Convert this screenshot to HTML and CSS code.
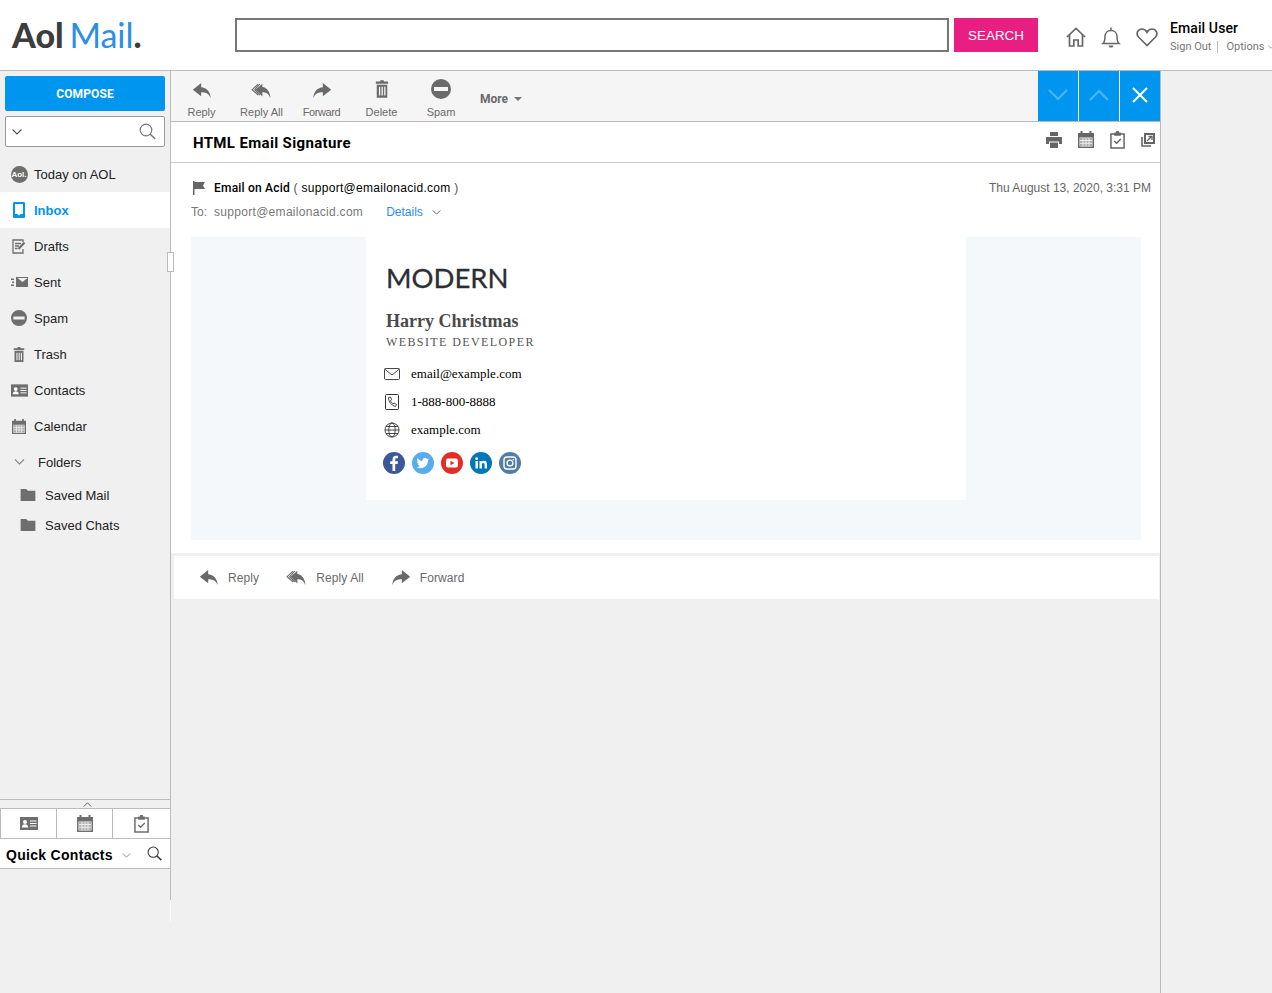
FILE: index.html
```html
<!DOCTYPE html>
<html lang="en">
<head>
  <meta charset="UTF-8" />
  <title>Aol Mail</title>
  <link rel="stylesheet" href="styles.css">
</head>
<body>

  <svg class="sprite" xmlns="http://www.w3.org/2000/svg">
    <symbol id="i-reply" viewBox="0 0 24 20"><path d="M11 1 1 9l10 8v-5c5 0 9 1 11.500 7C22 11 17 6.500 11 6Z"/></symbol>
    <symbol id="i-replyall" viewBox="0 0 24 20"><path d="M13 2 5 9l8 8v-5c4 0 7 1 9.500 7C22 11 18 6.500 13 6Z"/><path d="M8 2.500 1 9l7 6.500M10 2.500 4 9l6 6.500" fill="none" stroke="currentColor" stroke-width="1.300"/></symbol>
    <symbol id="i-forward" viewBox="0 0 24 20"><path d="M13 1l10 8-10 8v-5c-5 0-9 1-11.500 7C2 11 7 6.500 13 6Z"/></symbol>
    <symbol id="i-trash" viewBox="0 0 16 20"><path d="M6 0h4v1.500h5V4H1V1.500h5ZM2 5h12v15H2Zm2.500 2.500v10h1.500v-10Zm3 0v10H9v-10Zm3 0v10H12v-10Z" fill-rule="evenodd"/></symbol>
    <symbol id="i-spam" viewBox="0 0 20 20"><path d="M10 0a10 10 0 1 1 0 20a10 10 0 0 1 0-20ZM3 8v4h14V8Z" fill-rule="evenodd"/></symbol>
    <symbol id="i-search" viewBox="0 0 17 17"><circle cx="7" cy="7" r="5.800" fill="none" stroke="currentColor" stroke-width="1.200"/><path d="m11 11 5.300 5" fill="none" stroke="currentColor" stroke-width="1.600"/></symbol>
    <symbol id="i-chev" viewBox="0 0 10 6"><path d="m.5.500 4.500 4.500L9.500.500" fill="none" stroke="currentColor" stroke-width="1.100"/></symbol>
    <symbol id="i-cal" viewBox="0 0 16 17"><path d="M0 2h2.500V0h2v2h7V0h2v2H16v15H0Zm1.500 4.500v9h13v-9Z" fill-rule="evenodd"/><path d="M2 7h12v8H2Z" fill-opacity=".55"/><path d="M5 7v8.500M8 7v8.500M11 7v8.500M2 9.500h12M2 12.300h12" stroke="#f4f4f4" stroke-width=".9"/></symbol>
    <symbol id="i-task" viewBox="0 0 16 19"><path d="M1 3h14v15H1Z" fill="none" stroke="currentColor" stroke-width="1.600"/><path d="M4.500 1.500h2V0h3v1.500h2V5h-7Z"/><path d="m4.500 10.500 2.500 2.500 4.500-4.500" fill="none" stroke="currentColor" stroke-width="1.500"/></symbol>
    <symbol id="i-card" viewBox="0 0 18 13"><path d="M0 0h18v13H0Z"/><circle cx="5" cy="5" r="2" fill="#fff"/><path d="M1.800 10.500c0-2.500 1.500-3.300 3.200-3.300s3.200.8 3.200 3.300Z" fill="#fff"/><path d="M10 4h6.500M10 6.500h6.500M10 9h6.500" stroke="#fff"/></symbol>
    <symbol id="i-folder" viewBox="0 0 16 13"><path d="M0 0h6l2 2h8v11H0Z"/></symbol>
  </svg>

  <header class="topbar">
    <a class="logo"><b>Aol</b> <span>Mail</span><b>.</b></a>
    <form class="search">
      <input class="search-input" type="text" />
      <button class="search-btn" type="button">SEARCH</button>
    </form>
    <div class="top-icons">
      <svg width="20" height="20" viewBox="0 0 20 20" fill="none" stroke="currentColor" stroke-width="1.700"><path d="M1 10 10 1.500 19 10M3.500 8v11h4.300v-6h4.400v6h4.300V8"/></svg>
      <svg width="20" height="22" viewBox="0 0 20 22" fill="none" stroke="currentColor" stroke-width="1.500"><path d="M2 17.500c2-2 2-4 2-7 0-3.500 2.500-6 6-6s6 2.500 6 6c0 3 0 5 2 7ZM10 1.500v3"/><path d="M7.500 19.500h5l-1 2h-3Z" fill="currentColor" stroke="none"/></svg>
      <svg width="22" height="20" viewBox="0 0 22 20" fill="none" stroke="currentColor" stroke-width="1.700"><path d="M11 18.500 2.500 10C-.5 6.500 2 2 6 2c2.200 0 4 1.300 5 3.300C12 3.300 13.800 2 16 2c4 0 6.500 4.500 3.500 8Z"/></svg>
    </div>
    <div class="user">
      <div class="user-name">Email User</div>
      <div class="user-links"><a>Sign Out</a><a class="user-opt">Options <svg width="6" height="4"><use href="#i-chev"/></svg></a></div>
    </div>
  </header>

  <div class="app">
    <aside class="sidebar">
      <button class="compose" type="button">COMPOSE</button>
      <div class="side-search">
        <svg width="10" height="6"><use href="#i-chev"/></svg>
        <svg class="side-search-icon" width="17" height="17"><use href="#i-search"/></svg>
      </div>

      <nav class="nav">
        <a class="nav-item"><span class="nav-ico"><span class="aol-badge">Aol.</span></span>Today on AOL</a>
        <a class="nav-item active"><span class="nav-ico"><svg width="12" height="16" viewBox="0 0 12 16"><path d="M0 1.500C0 .5.500 0 1.500 0h9c1 0 1.500.5 1.500 1.500v13c0 1-.5 1.500-1.500 1.500h-9C.5 16 0 15.500 0 14.500Zm2 .5v10h2.500l1.500 1.500L7.500 12H10V2Z" fill-rule="evenodd"/></svg></span>Inbox</a>
        <a class="nav-item"><span class="nav-ico"><svg width="14" height="15" viewBox="0 0 14 15" fill="none" stroke="currentColor" stroke-width="1.300"><path d="M11 10v4H1V1h10v2M3 4.500h6M3 7h4M3 9.500h2.500"/><path d="m6.500 10 6-6.500" stroke-width="2.200"/></svg></span>Drafts</a>
        <a class="nav-item"><span class="nav-ico"><svg width="17" height="10" viewBox="0 0 17 10"><path d="M5 0h12v10H5Zm1.500 1 5 4 5-4" fill-rule="evenodd"/><path d="M0 1.500h3v1.500H0Zm1 3h2V6H1Zm-1 3h3V9H0Z"/></svg></span>Sent</a>
        <a class="nav-item"><span class="nav-ico"><svg width="16" height="16"><use href="#i-spam"/></svg></span>Spam</a>
        <a class="nav-item"><span class="nav-ico"><svg width="12" height="15"><use href="#i-trash"/></svg></span>Trash</a>
        <a class="nav-item"><span class="nav-ico"><svg width="17" height="13"><use href="#i-card"/></svg></span>Contacts</a>
        <a class="nav-item"><span class="nav-ico"><svg width="14" height="15"><use href="#i-cal"/></svg></span>Calendar</a>
        <a class="nav-item nav-folders"><span class="nav-ico"><svg class="chev-light" width="11" height="6"><use href="#i-chev"/></svg></span>Folders</a>
        <a class="nav-sub"><svg width="16" height="12"><use href="#i-folder"/></svg>Saved Mail</a>
        <a class="nav-sub"><svg width="16" height="12"><use href="#i-folder"/></svg>Saved Chats</a>
      </nav>

      <div class="quick">
        <div class="quick-toggle"><svg width="9" height="5" viewBox="0 0 10 6" fill="none"><path d="m.5 5.500 4.500-4.500 4.500 4.500" stroke="#555" stroke-width="1.100"/></svg></div>
        <div class="quick-tabs">
          <span><svg width="18" height="13"><use href="#i-card"/></svg></span>
          <span><svg width="16" height="17"><use href="#i-cal"/></svg></span>
          <span><svg width="15" height="18"><use href="#i-task"/></svg></span>
        </div>
        <div class="quick-head">
          <b>Quick Contacts</b>
          <svg class="chev-light" width="9" height="5"><use href="#i-chev"/></svg>
          <svg class="quick-search" width="15" height="15"><use href="#i-search"/></svg>
        </div>
      </div>
      <span class="resizer"></span>
    </aside>

    <main class="reader">
      <div class="toolbar">
        <a class="tool"><svg width="20" height="17"><use href="#i-reply"/></svg>Reply</a>
        <a class="tool tool-all"><svg width="21" height="17"><use href="#i-replyall"/></svg>Reply All</a>
        <a class="tool tool-fwd"><svg width="20" height="17"><use href="#i-forward"/></svg>Forward</a>
        <a class="tool tool-del"><svg width="14" height="18"><use href="#i-trash"/></svg>Delete</a>
        <a class="tool tool-spam"><svg width="20" height="20"><use href="#i-spam"/></svg>Spam</a>
        <a class="tool-more">More <i class="caret"></i></a>
        <div class="pager">
          <button type="button" class="pager-off"><svg width="22" height="12"><use href="#i-chev"/></svg></button>
          <button type="button" class="pager-off"><svg class="flip" width="22" height="12"><use href="#i-chev"/></svg></button>
          <button type="button"><svg width="16" height="16" viewBox="0 0 16 16"><path d="m1 1 14 14M15 1 1 15" stroke="#fff" stroke-width="2"/></svg></button>
        </div>
      </div>

      <div class="subject">
        <h1>HTML Email Signature</h1>
        <div class="subject-icons">
          <svg width="16" height="16" viewBox="0 0 16 16"><path d="M4 0h8v4H4ZM0 5h16v7h-3V9.500H3V12H0Zm4 5.500h8V16H4Z"/></svg>
          <svg width="16" height="17"><use href="#i-cal"/></svg>
          <svg width="15" height="18"><use href="#i-task"/></svg>
          <svg width="14" height="14" viewBox="0 0 14 14" fill="none" stroke="currentColor"><path d="M4 1h9v9H4Z" stroke-width="2"/><path d="M1 4v9h9" stroke-width="1.600"/><path d="m6 8 4.500-4.500M7.500 3.500h3.500V7" stroke-width="1.300"/></svg>
        </div>
      </div>

      <div class="meta">
        <div class="meta-row">
          <svg class="flag" width="12" height="14" viewBox="0 0 12 14"><path d="M0 0h1.500v14H0ZM1.500 1H12L10 4.500 12 8H1.500Z"/></svg>
          <span class="sender"><b>Email on Acid</b> <i>(</i> support@emailonacid.com <i>)</i></span>
          <span class="date">Thu August 13, 2020, 3:31 PM</span>
        </div>
        <div class="meta-to">
          <span class="to-label">To:</span>
          <span class="to-addr">support@emailonacid.com</span>
          <a class="details">Details</a>
          <svg width="9" height="5"><use href="#i-chev"/></svg>
        </div>
      </div>

      <div class="message">
        <div class="sig">
          <div class="sig-brand">MODERN</div>
          <div class="sig-name">Harry Christmas</div>
          <div class="sig-role">WEBSITE DEVELOPER</div>
          <div class="sig-line">
            <svg width="16" height="12" viewBox="0 0 16 12" fill="none" stroke="#333" stroke-width=".9"><rect x=".5" y=".5" width="15" height="11" rx="1"/><path d="m.8 1.200 7.200 5.800 7.200-5.800"/></svg>
            email@example.com
          </div>
          <div class="sig-line">
            <svg width="16" height="16" viewBox="0 0 16 16" fill="none" stroke="#333"><rect x="1.500" y=".5" width="13" height="15" rx="1"/><path d="M4.500 3.500c0 4.500 3 8 7 9l1-2-2.500-1.500-1 1C8 9.500 7 8 6.500 6.500l1.200-.8L6.500 3Z" stroke-width=".9"/></svg>
            1-888-800-8888
          </div>
          <div class="sig-line">
            <svg width="16" height="16" viewBox="0 0 16 16" fill="none" stroke="#333" stroke-width=".9"><circle cx="8" cy="8" r="7"/><ellipse cx="8" cy="8" rx="3.200" ry="7"/><path d="M1 8h14M2 4.500h12M2 11.500h12"/></svg>
            example.com
          </div>
          <div class="social">
            <svg width="22" height="22" viewBox="0 0 22 22"><circle cx="11" cy="11" r="11" fill="#3b5998"/><path d="M12.200 19v-7h2.400l.4-2.800h-2.800V7.600c0-.8.300-1.300 1.400-1.300H15V3.800c-.4 0-1.200-.1-2-.1-2.100 0-3.500 1.300-3.500 3.600v1.900H7.200V12h2.300v7Z" fill="#fff"/></svg>
            <svg width="22" height="22" viewBox="0 0 22 22"><circle cx="11" cy="11" r="11" fill="#55acee"/><path d="M17 7.300c-.5.200-1 .4-1.500.4.500-.3.900-.8 1.100-1.400-.5.300-1 .5-1.600.6a2.600 2.600 0 0 0-4.500 2.400C8.400 8.700 6.500 7.700 5.300 6.100c-.7 1.200-.3 2.700.8 3.500-.4 0-.8-.1-1.200-.3 0 1.300.9 2.400 2.100 2.600-.4.100-.8.100-1.200 0 .3 1 1.300 1.800 2.500 1.800A5.300 5.300 0 0 1 4.500 15a7.400 7.400 0 0 0 11.400-6.500c.4-.3.800-.7 1.100-1.200Z" fill="#fff"/></svg>
            <svg width="22" height="22" viewBox="0 0 22 22"><circle cx="11" cy="11" r="11" fill="#e52d27"/><rect x="5" y="6.500" width="12" height="9" rx="2" fill="#fff"/><path d="m9.500 8.800 4 2.200-4 2.200Z" fill="#e52d27"/></svg>
            <svg width="22" height="22" viewBox="0 0 22 22"><circle cx="11" cy="11" r="11" fill="#0077b5"/><path d="M5.500 9h2.400v7.500H5.500ZM6.700 5.300a1.400 1.400 0 1 1 0 2.800 1.400 1.400 0 0 1 0-2.800ZM9.500 9h2.300v1c.4-.7 1.200-1.200 2.300-1.200 2.300 0 2.900 1.500 2.900 3.500v4.200h-2.400v-3.700c0-1-.2-1.900-1.300-1.900s-1.400.8-1.400 1.800v3.800H9.500Z" fill="#fff"/></svg>
            <svg width="22" height="22" viewBox="0 0 22 22"><circle cx="11" cy="11" r="11" fill="#517fa4"/><rect x="5" y="5" width="12" height="12" rx="3" fill="none" stroke="#fff" stroke-width="1.400"/><circle cx="11" cy="11" r="2.900" fill="none" stroke="#fff" stroke-width="1.400"/><circle cx="14.400" cy="7.600" r=".8" fill="#fff"/></svg>
          </div>
        </div>
      </div>

      <div class="replybar">
        <a class="reply-link"><svg width="20" height="17"><use href="#i-reply"/></svg>Reply</a>
        <a class="reply-link"><svg width="21" height="17"><use href="#i-replyall"/></svg>Reply All</a>
        <a class="reply-link"><svg width="20" height="17"><use href="#i-forward"/></svg>Forward</a>
      </div>
    </main>
  </div>

</body>
</html>
```

FILE: styles.css
```css
* {
  box-sizing: border-box;
}

body {
  margin: 0;
  height: 993px;
  overflow: hidden;
  background-color: #f0f0f0;
  color: #000;
  font-family: "Liberation Sans", Arial, sans-serif;
  font-size: 13px;
}

.sprite {
  display: none;
}

svg {
  display: block;
  flex: none;
}

svg:not([fill]) {
  fill: currentColor;
}

button {
  border: none;
  padding: 0;
  font-family: inherit;
}

/* top bar */

.topbar {
  display: flex;
  align-items: center;
  height: 71px;
  background-color: #fff;
  border-bottom: 1px solid #bbb;
  padding-left: 12px;
}

.topbar > * {
  flex: none;
}

.logo {
  width: 223px;
  font-family: Lato, sans-serif;
  font-size: 34px;
  line-height: 1;
  color: #3d3d3d;
  white-space: nowrap;
  word-spacing: -3px;
}

.logo b {
  font-weight: 900;
}

.logo span {
  color: #2a8fe6;
  font-weight: 400;
}

.search {
  display: flex;
  gap: 5px;
  height: 34px;
}

.search-input {
  width: 714px;
  height: 34px;
  border: 2px solid #777;
  background-color: #fff;
}

.search-btn {
  width: 84px;
  background-color: #e91e82;
  color: #fff;
  font-size: 13.4px;
}

.top-icons {
  display: flex;
  align-items: center;
  gap: 15px;
  color: #666;
  margin-left: 28px;
  padding-top: 3px;
}

.user {
  margin-left: 12px;
  padding-top: 3px;
  white-space: nowrap;
  font-family: Roboto, sans-serif;
}

.user-name {
  font-size: 14px;
  font-weight: 500;
  letter-spacing: 0.1px;
  line-height: 16px;
}

.user-links {
  display: flex;
  align-items: center;
  font-size: 11px;
  line-height: 12px;
  color: #777;
  margin-top: 5px;
}

.user-links a:first-child {
  padding-right: 6px;
  border-right: 1px solid #bbb;
}

.user-opt {
  display: flex;
  align-items: center;
  gap: 4px;
  padding-left: 8px;
}

/* sidebar */

.app {
  display: flex;
  align-items: flex-start;
}

.sidebar {
  position: relative;
  display: flex;
  flex-direction: column;
  width: 171px;
  height: 850px;
  padding-top: 5px;
  background:
    linear-gradient(#bbb, #bbb) right top / 1px 829px no-repeat,
    linear-gradient(#fff, #fff) right bottom / 1px 21px no-repeat;
}

.compose {
  width: 160px;
  height: 35px;
  margin-left: 5px;
  background-color: #0096f0;
  border-radius: 2px;
  color: #fff;
  font-family: Roboto, sans-serif;
  font-size: 12px;
  font-weight: 700;
  letter-spacing: 0.1px;
}

.side-search {
  display: flex;
  align-items: center;
  justify-content: space-between;
  width: 160px;
  height: 31px;
  margin: 5px 0 0 5px;
  padding: 0 8px 0 6px;
  background-color: #fff;
  border: 1px solid #999;
  border-radius: 2px;
  color: #555;
}

.side-search-icon {
  color: #777;
}

.nav {
  display: flex;
  flex-direction: column;
  flex: 1;
  padding-top: 9px;
}

.nav-item {
  display: flex;
  align-items: center;
  width: 170px;
  height: 36px;
  color: #222;
}

.nav-ico {
  display: flex;
  flex: none;
  justify-content: center;
  width: 20px;
  margin: 0 5px 0 9px;
  color: #6e6e6e;
}

.nav-item.active {
  background-color: #fff;
  color: #0096f0;
  font-weight: 700;
}

.nav-item.active .nav-ico {
  color: #0096f0;
}

.aol-badge {
  display: block;
  width: 17px;
  height: 17px;
  border-radius: 50%;
  background-color: #6e6e6e;
  color: #fff;
  font-size: 8px;
  font-weight: 700;
  line-height: 17px;
  text-align: center;
  overflow: hidden;
}

.chev-light {
  color: #888;
}

.nav-item.nav-folders .nav-ico {
  margin-right: 9px;
}

.nav-sub {
  display: flex;
  align-items: center;
  gap: 9px;
  height: 30px;
  padding-left: 20px;
  color: #222;
}

.nav-sub svg {
  color: #6e6e6e;
}

.quick {
  width: 170px;
  margin-bottom: 52px;
}

.quick-toggle {
  display: flex;
  justify-content: center;
  align-items: center;
  height: 9px;
  padding-left: 4px;
  border-top: 1px solid #bbb;
}

.quick-tabs {
  display: grid;
  grid-template-columns: 56px 56px 58px;
  height: 31px;
  background-color: #fff;
  border-top: 1px solid #bbb;
  border-bottom: 1px solid #bbb;
  color: #6e6e6e;
}

.quick-tabs span {
  display: flex;
  align-items: center;
  justify-content: center;
  border-left: 1px solid #bbb;
}

.quick-head {
  display: flex;
  align-items: center;
  height: 30px;
  padding-left: 6px;
  background-color: #fff;
  border-bottom: 1px solid #bbb;
  font-size: 14px;
  letter-spacing: 0.3px;
}

.quick-head b {
  margin-right: 9px;
  padding-top: 3px;
}

.quick-head .chev-light {
  margin-top: 3px;
}

.quick-search {
  margin-left: 16px;
  color: #333;
}

.resizer {
  position: absolute;
  left: 167px;
  top: 181px;
  width: 7px;
  height: 20px;
  background-color: #fff;
  border: 1px solid #bbb;
}

/* reader */

.reader {
  display: flex;
  flex-direction: column;
  width: 990px;
  height: 922px;
  border-right: 1px solid #bbb;
}

.toolbar {
  display: flex;
  align-items: stretch;
  height: 51px;
  padding-left: 17px;
  background-color: #f5f5f5;
  border-bottom: 1px solid #bbb;
}

.tool {
  display: flex;
  flex-direction: column;
  align-items: center;
  justify-content: flex-end;
  gap: 7px;
  width: 27px;
  padding-bottom: 3px;
  color: #6a6a6a;
  font-size: 11px;
  white-space: nowrap;
}

.tool-all {
  width: 43px;
  margin-left: 25px;
}

.tool-fwd {
  width: 37px;
  margin-left: 20px;
  letter-spacing: -0.4px;
}

.tool-del {
  width: 31px;
  margin-left: 26px;
}

.tool-del svg {
  margin-bottom: 1px;
}

.tool-spam {
  width: 28px;
  margin-left: 30px;
}

.tool-more {
  display: flex;
  align-items: center;
  gap: 6px;
  margin-left: 25px;
  padding-top: 5px;
  color: #6a6a6a;
  font-family: Roboto, sans-serif;
  font-size: 12px;
  font-weight: 700;
}

.caret {
  width: 0;
  height: 0;
  border-left: 4px solid transparent;
  border-right: 4px solid transparent;
  border-top: 4px solid #777;
}

.pager {
  display: flex;
  gap: 1px;
  margin-left: auto;
  background-color: #fff;
}

.pager button {
  display: flex;
  align-items: center;
  justify-content: center;
  width: 40px;
  padding-bottom: 2px;
  background-color: #0096f0;
}

.pager .pager-off {
  color: #4db5f5;
}

.flip {
  transform: scaleY(-1);
}

.subject {
  display: flex;
  align-items: center;
  justify-content: space-between;
  height: 41px;
  padding: 0 5px 0 22px;
  background-color: #fff;
  border-bottom: 1px solid #ccc;
}

.subject h1 {
  margin: 0;
  padding-top: 2px;
  font-family: Roboto, sans-serif;
  font-size: 15px;
  font-weight: 700;
  letter-spacing: 0.35px;
}

.subject-icons {
  display: flex;
  align-items: center;
  gap: 16px;
  color: #666;
  padding-bottom: 5px;
}

.meta {
  height: 74px;
  padding: 17px 9px 0 20px;
  background-color: #fff;
  font-size: 12px;
}

.meta-row {
  display: flex;
  align-items: center;
  height: 16px;
}

.flag {
  margin: 0 9px 0 2px;
  color: #666;
}

.sender,
.to-addr {
  letter-spacing: 0.3px;
}

.sender b {
  font-family: Roboto, sans-serif;
  font-weight: 500;
  letter-spacing: 0.2px;
}

.sender i {
  color: #555;
  font-style: normal;
}

.date {
  margin-left: auto;
  color: #666;
}

.meta-to {
  display: flex;
  align-items: center;
  height: 16px;
  margin-top: 8px;
  color: #777;
}

.to-label {
  width: 23px;
}

.details {
  margin: 0 9px 0 23px;
  color: #2a8fe6;
}

.meta-to svg {
  color: #555;
}

.message {
  height: 316px;
  padding: 0 19px 0 20px;
  background-color: #fff;
}

.sig {
  height: 303px;
  padding: 0 175px 40px;
  background-color: #f5f8fb;
}

.sig-brand,
.sig-name,
.sig-role,
.sig-line,
.social {
  background-color: #fff;
  padding-left: 20px;
}

.sig-brand {
  height: 69px;
  padding-top: 25px;
  color: #2b2f33;
  font-family: Lato, sans-serif;
  font-size: 27.5px;
  line-height: 32px;
  -webkit-text-stroke: 0.3px #2b2f33;
}

.sig-name {
  height: 29px;
  padding-top: 4px;
  color: #4a4a4a;
  font-family: "Liberation Serif", serif;
  font-size: 18px;
  font-weight: 700;
  line-height: 22px;
}

.sig-role {
  height: 25px;
  color: #555;
  font-family: "Liberation Serif", serif;
  font-size: 12px;
  letter-spacing: 1.4px;
  line-height: 14px;
}

.sig-line {
  display: flex;
  align-items: center;
  gap: 11px;
  height: 28px;
  padding-left: 18px;
  font-family: "Liberation Serif", serif;
  font-size: 13px;
}

.social {
  display: flex;
  gap: 7px;
  height: 56px;
  padding: 8px 0 0 17px;
}

.replybar {
  display: flex;
  align-items: center;
  gap: 27px;
  height: 43px;
  margin: 3px 1px 0 3px;
  padding-left: 25px;
  background-color: #fff;
  color: #6a6a6a;
  font-size: 12px;
  letter-spacing: 0.1px;
}

.reply-link {
  display: flex;
  align-items: center;
  gap: 9px;
}
```
